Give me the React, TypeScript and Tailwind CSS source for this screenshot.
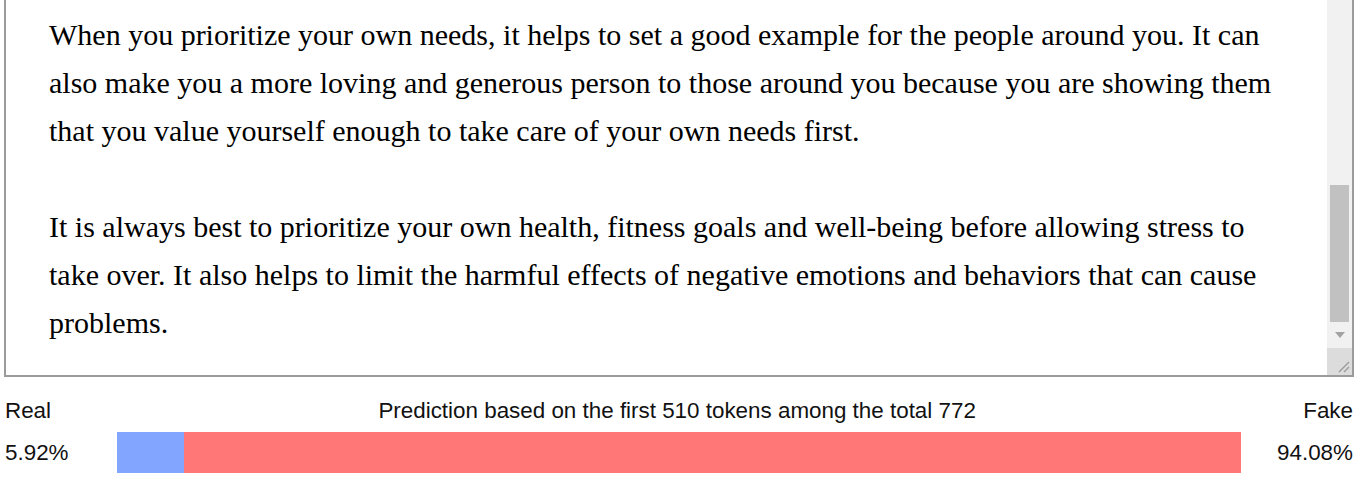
const paragraphs = [
  [
    "When you prioritize your own needs, it helps to set a good example for the people around you. It can",
    "also make you a more loving and generous person to those around you because you are showing them",
    "that you value yourself enough to take care of your own needs first.",
  ],
  [
    "It is always best to prioritize your own health, fitness goals and well-being before allowing stress to",
    "take over. It also helps to limit the harmful effects of negative emotions and behaviors that can cause",
    "problems.",
  ],
];

const real = 5.92;
const fake = 94.08;

function Scrollbar() {
  return (
    <div className="flex w-[25px] flex-col bg-[#f1f1f1]">
      <div className="h-[185px]" />
      <div className="mx-[3px] h-[137px] bg-[#c1c1c1]" />
      <div className="flex h-[26px] items-center justify-center">
        <svg width="10" height="6" viewBox="0 0 10 6">
          <path d="M0 0h10L5 6z" fill="#a3a3a3" />
        </svg>
      </div>
      <div className="relative flex-1 bg-[#dcdcdc]">
        <svg className="absolute bottom-[2px] right-[2px]" width="14" height="14" viewBox="0 0 14 14">
          <path d="M13 3L3 13M13 8L8 13" stroke="#9a9a9a" strokeWidth="1.4" />
        </svg>
      </div>
    </div>
  );
}

export default function App() {
  return (
    <div className="h-[485px] w-[1362px] overflow-hidden bg-white">
      <div className="ml-[4px] mr-[8px] flex h-[377px] border-2 border-t-0 border-[#9b9b9b]">
        <div
          className="flex-1 pl-[43px] pt-[11px] text-[30px] leading-[48px] text-black"
          style={{ fontFamily: '"Liberation Serif", "Times New Roman", serif' }}
        >
          {paragraphs.map((lines, i) => (
            <div key={i} className={i > 0 ? "mt-[48px]" : ""}>
              {lines.map((line) => (
                <div key={line} className="whitespace-nowrap">
                  {line}
                </div>
              ))}
            </div>
          ))}
        </div>
        <Scrollbar />
      </div>

      <div
        className="px-[5px] pr-[9px] text-[22.4px] leading-[26px] text-[#111]"
        style={{ fontFamily: '"Liberation Sans", Arial, sans-serif' }}
      >
        <div className="mt-[21px] flex h-[26px] items-center justify-between">
          <span>Real</span>
          <span>Prediction based on the first 510 tokens among the total 772</span>
          <span>Fake</span>
        </div>
        <div className="mt-[8px] flex h-[41px] items-center">
          <span className="w-[112px]">{real.toFixed(2)}%</span>
          <div className="flex h-full w-[1124px]">
            <div className="h-full bg-[#82a6ff]" style={{ width: `${real}%` }} />
            <div className="h-full bg-[#ff7777]" style={{ width: `${fake}%` }} />
          </div>
          <span className="flex-1 text-right">{fake.toFixed(2)}%</span>
        </div>
      </div>
    </div>
  );
}
